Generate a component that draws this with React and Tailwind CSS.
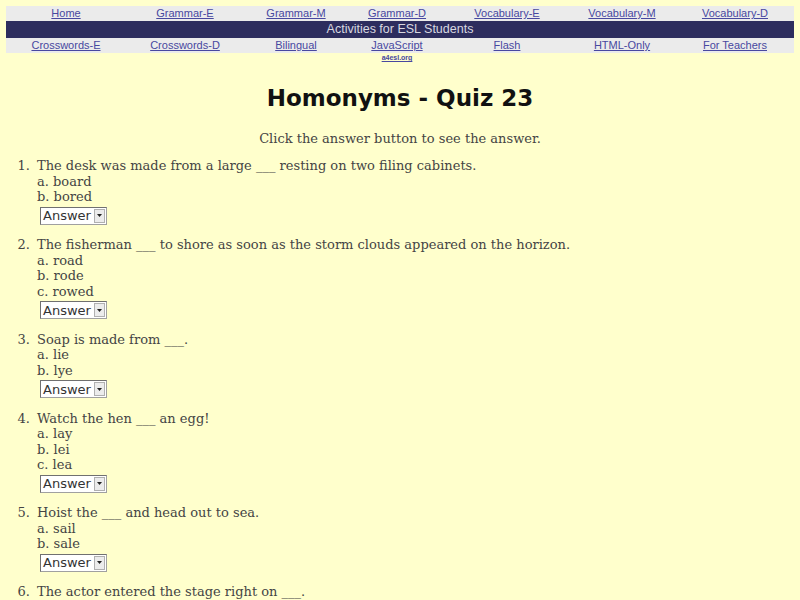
import React from "react";

const row1 = ["Home", "Grammar-E", "Grammar-M", "Grammar-D", "Vocabulary-E", "Vocabulary-M", "Vocabulary-D"];
const row3 = ["Crosswords-E", "Crosswords-D", "Bilingual", "JavaScript", "Flash", "HTML-Only", "For Teachers"];

const questions = [
  { q: "The desk was made from a large ___ resting on two filing cabinets.", o: ["a. board", "b. bored"] },
  { q: "The fisherman ___ to shore as soon as the storm clouds appeared on the horizon.", o: ["a. road", "b. rode", "c. rowed"] },
  { q: "Soap is made from ___.", o: ["a. lie", "b. lye"] },
  { q: "Watch the hen ___ an egg!", o: ["a. lay", "b. lei", "c. lea"] },
  { q: "Hoist the ___ and head out to sea.", o: ["a. sail", "b. sale"] },
  { q: "The actor entered the stage right on ___.", o: ["a. cue", "b. queue"] },
];

function Answer() {
  return (
    <div
      className="mt-[2px] mb-[1px] ml-[3px] inline-flex h-[18px] w-[67px] items-center border border-[#a0a0a0] border-t-[#707070] border-l-[#707070] bg-white"
      style={{ fontFamily: '"DejaVu Sans", sans-serif' }}
    >
      <span className="flex-1 pl-[2px] text-[13px] leading-none text-[#333]">Answer</span>
      <span className="mr-[1px] flex h-[14px] w-[11px] items-center justify-center border border-[#b0b0b0] bg-[#ececec]">
        <svg width="5" height="3" viewBox="0 0 5 3"><path d="M0 0H5L2.5 3Z" fill="#222" /></svg>
      </span>
    </div>
  );
}

export default function App() {
  return (
    <div className="h-[600px] w-[800px] overflow-hidden bg-[#ffffcc] pt-[6px]" style={{ fontFamily: '"DejaVu Serif", serif' }}>
      <div className="mx-[6px]" style={{ fontFamily: '"Liberation Sans", Arial, sans-serif' }}>
        <div className="grid h-[15px] grid-cols-[120px_118px_104px_98px_122px_108px_118px] items-center bg-[#ebebeb] text-[11px] leading-none">
          {row1.map((t) => (
            <a key={t} className="text-center text-[#4848a0] underline">{t}</a>
          ))}
        </div>
        <div className="flex h-[17px] items-center justify-center bg-[#2d2d5e] text-[12.5px] leading-none text-[#d8d8e0]">
          Activities for ESL Students
        </div>
        <div className="grid h-[15px] grid-cols-[120px_118px_104px_98px_122px_108px_118px] items-center bg-[#ebebeb] text-[11px] leading-none">
          {row3.map((t) => (
            <a key={t} className="text-center text-[#4848a0] underline">{t}</a>
          ))}
        </div>
        <div className="grid grid-cols-[120px_118px_104px_98px_122px_108px_118px] text-[7px] font-bold leading-[10px]">
          <span></span><span></span><span></span>
          <a className="text-center text-[#4848a0] underline">a4esl.org</a>
        </div>
      </div>

      <h1 className="mt-[18px] text-center text-[23px] font-bold leading-[34px] text-[#111]" style={{ fontFamily: '"DejaVu Sans", sans-serif' }}>
        Homonyms - Quiz 23
      </h1>
      <p className="mt-[16px] text-center text-[13px] leading-[15px] text-[#444]">
        Click the answer button to see the answer.
      </p>

      <div className="mt-[12px] text-[13px] leading-[15.5px] text-[#444]">
        {questions.map((item, i) => (
          <div key={i} className="mb-[11.5px] flex">
            <span className="w-[31px] shrink-0 pr-[1px] text-right">{i + 1}.</span>
            <div className="pl-[6px]">
              <div>{item.q}</div>
              {item.o.map((o) => (
                <div key={o}>{o}</div>
              ))}
              <Answer />
            </div>
          </div>
        ))}
      </div>
    </div>
  );
}
